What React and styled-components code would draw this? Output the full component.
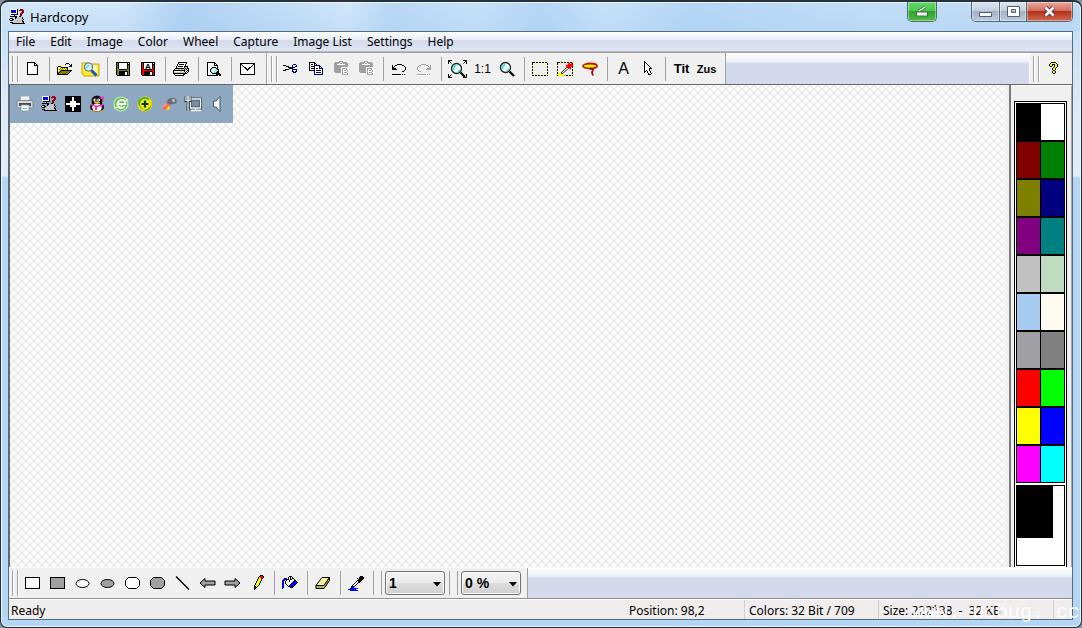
import React from 'react';
import styled, { createGlobalStyle } from 'styled-components';

const GlobalStyle = createGlobalStyle`
  *, *::before, *::after { box-sizing: border-box; }
  html, body, #root { height: 100%; }
  body {
    margin: 0;
    background: #8b9097;
    font: 12px/16px "Noto Sans", "Open Sans", sans-serif;
    color: #000;
    overflow: hidden;
  }
  button, select { font: inherit; color: inherit; }
`;

/* ---------- window ---------- */

const Window = styled.div`
  display: flex;
  flex-direction: column;
  height: 100%;
  padding: 0 8px 7px 7px;
  border: 1px solid #27313d;
  border-top-width: 2px;
  border-radius: 8px 8px 7px 7px;
  box-shadow: inset 0 0 0 1px #e9f5ff;
  background:
    linear-gradient(90deg, transparent 0, transparent 11%, #94c2ee88 17%, #a4ccf144 28%, transparent 32%, #a4ccf188 36%, #b4d6f666 44%, #9ccaf388 50%, #b4d6f655 56%, #9ccaf388 64%, #a4ccf155 80%, #a4ccf166 100%) top / 100% 29px no-repeat,
    linear-gradient(180deg, #d3e6f8 0, #c6dff7 29px, #dde9f4 100px, #e2ecf6 174px, #b3d6f5 176px, #b3d6f5 100%);
`;

const TitleBar = styled.header`
  display: flex;
  align-items: flex-start;
  height: 29px;
  padding-left: 1px;
  flex: none;
`;

const AppTitle = styled.h1`
  display: flex;
  align-items: center;
  gap: 5px;
  margin: 0;
  padding-top: 6px;
  flex: 1;
  font-size: 13px;
  font-weight: 400;
  line-height: 18px;
`;

const captionTones = {
  plain: 'linear-gradient(#dbe5ef 0, #c3d0de 45%, #a1b1c4 50%, #bccbdc 100%)',
  close: 'linear-gradient(#e9a99c 0, #d0705f 45%, #b5301b 50%, #cf6a4c 100%)',
  green: 'linear-gradient(#63d765 0, #4fc850 45%, #2da32d 50%, #51bd45 100%)',
};

const CaptionArea = styled.div`
  display: flex;
  gap: 34px;
`;

const CaptionGroup = styled.div`
  display: flex;
  height: 20px;
  border: 1px solid #566477;
  border-top: 0;
  border-radius: 0 0 5px 5px;
  overflow: hidden;
`;

const CaptionButton = styled.button`
  display: flex;
  align-items: center;
  justify-content: center;
  width: ${(p) => p.$width}px;
  height: 100%;
  padding: 0;
  border: 0;
  background: ${(p) => captionTones[p.$tone || 'plain']};
  box-shadow: inset 0 0 0 1px #ffffff66;
  & + & { border-left: 1px solid #566477; }
`;

const Client = styled.main`
  display: flex;
  flex-direction: column;
  flex: 1;
  min-height: 0;
  border: 1px solid #566a80;
  background: #f0f0f0;
`;

/* ---------- menu ---------- */

const MenuBar = styled.nav`
  display: flex;
  flex: none;
  gap: 1px;
  height: 20px;
  background: linear-gradient(#fdfeff 0, #e9edf7 40%, #d5daec 45%, #dfe4f3 100%);
  border-bottom: 1px solid #b4b7c6;
`;

const MenuItem = styled.button`
  padding: 0 7px;
  border: 0;
  background: none;
  line-height: 20px;
  white-space: nowrap;
`;

/* ---------- toolbars ---------- */

const Rebar = styled.div`
  display: flex;
  flex: none;
  height: ${(p) => p.$height}px;
  border-top: 1px solid ${(p) => (p.$lower ? '#ffffff' : '#a0a0a0')};
  border-bottom: 1px solid ${(p) => (p.$lower ? '#8f8f94' : '#686868')};
  background: linear-gradient(#ffffff 0, #e9edf7 30%, #d3d9ec 32%, #d3d9ec 100%);
`;

const Band = styled.div`
  display: flex;
  align-items: center;
  padding: 0 6px 0 3px;
  border-left: ${(p) => (p.$first ? 0 : 1)}px solid #fff;
  border-right: ${(p) => (p.$last ? 0 : 1)}px solid #a0a0a0;
  background: #f0f0f0;
  margin-left: ${(p) => (p.$last ? 'auto' : 0)};
`;

const Grip = styled.span`
  width: 6px;
  height: 26px;
  margin-right: 2px;
  border: solid #a0a0a0;
  border-width: 0 1px;
  box-shadow: 1px 0 #fff, inset 1px 0 #fff;
`;

const Tool = styled.button`
  display: flex;
  align-items: center;
  width: 25px;
  height: 24px;
  padding: 0 0 0 4px;
  border: 0;
  background: none;
`;

const TextTool = styled.button`
  width: 25px;
  height: 24px;
  padding: 0;
  border: 0;
  background: none;
  text-align: center;
  white-space: nowrap;
  font-family: "Liberation Sans", sans-serif;
  font-size: ${(p) => p.$size || 12}px;
  font-weight: ${(p) => (p.$bold ? 700 : 400)};
`;

const Divider = styled.span`
  display: flex;
  justify-content: center;
  width: 8px;
  height: 24px;
  &::before { content: ""; width: 1px; margin-left: 1px; background: #a0a0a0; }
`;

const SelectBox = styled.label`
  position: relative;
  display: block;
  width: 60px;
  height: 24px;
`;

const Select = styled.select`
  appearance: none;
  width: 100%;
  height: 100%;
  padding: 0 3px;
  border: 1px solid #707070;
  border-radius: 3px;
  background: linear-gradient(#f2f2f2 0, #ebebeb 50%, #dddddd 51%, #cfcfcf 100%);
  box-shadow: inset 0 0 0 1px #fafafa;
  font: 700 14px "Liberation Sans", sans-serif;
`;

const SelectArrow = styled.svg`
  position: absolute;
  right: 4px;
  top: 11px;
  pointer-events: none;
`;

/* ---------- work area ---------- */

const WorkArea = styled.div`
  display: flex;
  flex: 1;
  min-height: 0;
`;

const Canvas = styled.section`
  flex: 1;
  min-width: 0;
  border-left: 1px solid #686868;
  background-color: #fefefe;
  background-image:
    linear-gradient(45deg, transparent 43%, #e3e3e3 47% 53%, transparent 57%),
    linear-gradient(135deg, transparent 43%, #e3e3e3 47% 53%, transparent 57%);
  background-size: 8px 8px;
`;

const Capture = styled.div`
  display: flex;
  align-items: center;
  gap: 8px;
  width: 223px;
  height: 38px;
  padding-left: 7px;
  background: #8fa8c2;
`;

const Splitter = styled.div`
  flex: none;
  width: 7px;
  background: #f0f0f0;
  border-left: 1px solid #fff;
  border-right: 2px solid #7c7c7c;
`;

const PalettePanel = styled.aside`
  display: flex;
  flex: none;
  padding: 15px 4px 0 3px;
  border-top: 1px solid #fff;
  border-right: 1px solid #a8a8a8;
  background: #f0f0f0;
`;

const Palette = styled.div`
  display: flex;
  flex-direction: column;
  gap: 2px;
  padding: 1px;
  border: 1px solid #000;
  border-bottom: 0;
  background: #fff;
`;

const Swatches = styled.div`
  display: grid;
  grid-template-columns: 23px 23px;
  grid-auto-rows: 36px;
  gap: 2px 1px;
  padding: 1px;
  background: #000;
`;

const Swatch = styled.button`
  padding: 0;
  border: 0;
  background: ${(p) => p.$color};
`;

const Preview = styled.div`
  height: 81px;
  border: 1px solid #000;
  background: #fff;
`;

const CurrentColor = styled.div`
  width: 36px;
  height: 52px;
  background: #000;
`;

/* ---------- status bar ---------- */

const StatusBar = styled.footer`
  position: relative;
  display: flex;
  flex: none;
  height: 20px;
  border-top: 1px solid #fff;
  background: #f0eded;
  line-height: 21px;
`;

const StatusCell = styled.span`
  flex: ${(p) => (p.$width ? `0 0 ${p.$width}px` : '1')};
  padding-left: ${(p) => (p.$plain ? 2 : 4)}px;
  border-left: ${(p) => (p.$plain ? 0 : 1)}px solid #d2cfcf;
  white-space: pre;
`;

const Watermark = styled.span`
  position: absolute;
  right: -8px;
  top: 1px;
  color: #fff;
  font: 20px/24px "Liberation Mono", monospace;
  white-space: pre;
`;

/* ---------- icons ---------- */

const INK = {
  k: '#000', w: '#fff', y: '#ffff00', o: '#808000', r: '#ff0000', R: '#a00010',
  b: '#0000ff', n: '#000080', g: '#a0a0a0', s: '#c8c8c8', c: '#40e0e8',
};

const Svg16 = ({ children, ...rest }) => (
  <svg width="16" height="16" viewBox="0 0 16 16" overflow="visible" aria-hidden="true" {...rest}>
    {children}
  </svg>
);

function Pixels({ art, x = 0, y = 0, children }) {
  const runs = [];
  art.trim().split(/\s+/).forEach((row, j) => {
    for (let i = 0; i < row.length;) {
      let e = i + 1;
      while (row[e] === row[i]) e += 1;
      if (row[i] !== '.') {
        runs.push(<rect key={`${i}-${j}`} x={x + i} y={y + j} width={e - i} height="1" fill={INK[row[i]]} />);
      }
      i = e;
    }
  });
  return <Svg16 shapeRendering="crispEdges">{runs}{children}</Svg16>;
}

const DOC = `
kkkkkkkk...
kwwwwwwkk..
kwwwwwwkwk.
kwwwwwwkkkk
kwwwwwwwwwk
kwwwwwwwwwk
kwwwwwwwwwk
kwwwwwwwwwk
kwwwwwwwwwk
kwwwwwwwwwk
kwwwwwwwwwk
kwwwwwwwwwk
kkkkkkkkkkk`;

const OPEN = `
.........kkk....
........k...k.k.
.............kk.
.kkk........kkk.
kywykkkkkkk.....
kwyoyoyoyok.....
kyoyoyoyoyk.....
kwyokkkkkkkkkkk.
kyokoooooooook..
kokoooooooook...
kkoooooooook....
kkkkkkkkkkk.....`;

const FLOPPY = `
kkkkkkkkkkkkkk
kokwwwwwwwwkwk
kokwwwwwwwwkkk
kokwwwwwwwwkok
kokwwwwwwwwkok
kokwwwwwwwwkok
kokwwwwwwwwkok
kookkkkkkkkook
kooooooooooook
kookkkkkkkkkok
kookkkkkkwwkok
kookkkkkkwwkok
kookkkkkkwwkok
.kkkkkkkkkkkkk`;

const PRINTER = `
.....kkkkkkkkk..
.....kwwwwwwwk..
....kwkkkkkwk...
....kwwwwwwwk...
...kwkkkkkwkkkk.
...kwwwwwwwkssk.
..kkkkkkkkkskskk
.kssssssssskskwk
kkkkkkkkkkkkswkk
kwwwwwwyywwkwkwk
kssssssssssskwk.
kkkkkkkkkkkkkk..
.kwwwwwwwwkk....
..kkkkkkkkk.....`;

const PREVIEW = `
kkkkkkkk.......
kwwwwwwkk......
kwwwwwwkwk.....
kwwwwwwkkkk....
kwwwwwwwwwk....
kwwwwkkkkwk....
kwwwkcwwckk....
kwwkcwwwwckk...
kwwkwwwwcwsk...
kwwkcwwcwckk...
kwwwkcwcckkk...
kwwwwkkkkkkkk..
kwwwwwwwwkkkkk.
kkkkkkkkkkk.kk.`;

const CUT = `
..........nnn..
kkk......n...n.
.wwkkk...n..nn.
.....kkknnnn...
....wwkknn.....
..kkkkww.nnnnn.
kkk......n...n.
.........nn.nn.
..........nnn..`;

const COPY = `
kkkkkk.........
kwwwwkk........
kwkkwkwk.......
kwwwwnnnnnn....
kwkkknwwwwnn...
kwwwwnwwwwnwn..
kwkkknwnnwnnnn.
kwwwwnwwwwwwwn.
kkkkknwnnnnnwn.
.....nwwwwwwwn.
.....nwnnnnnwn.
.....nwwwwwwwn.
.....nnnnnnnnn.`;

const PASTE = `
.....gggg......
.gggggwwggggg..
gggggwggwggggg.
gggwwwwwwwwggg.
gggggggggggggg.
ggggggggggggggw
gggggggwwwwwww.
gggggggwgggggww
gggggggwgwwwgww
gggggggwgwggwgw
gggggggwgwwwwgw
.ggggggwgwgggww
.......wgwwwwgw
.......wggggggw`;

const UNDO = `
.....kkkkk....
k..kk.....kk..
k.k.........k.
kk...........k
kkkk.........k
kkkkk........k
............k.
..........kk..
..............
..............
kkkkkkkkk.k.k.
wwwwwwwwwwwwww`;

const REDO = `
....ggggg.....
..gg.....gg..g
.g.........g.g
g...........gg
g.........gggg
g........ggggg
.g............
..gg..........
..............
..............
ggggggggg.g.g.
wwwwwwwwwwwwww`;

const CURSOR = `
k.........
kk........
kwk.......
kwwk......
kwwwk.....
kwwwwk....
kwwwwwk...
kwwwwkkk..
kwwwwk....
kwkwwk....
kk.kwwk...
k..kwwk...
....kwwk..
....kkk...`;

const HELP = `
..kkkkk..
.kyyyyyk.
kyykkkyyk
kyyk.kyyk
.kk..kyyk
....kyyk.
...kyyk..
...kyyk..
....kk...
...kyyk..
...kyyk..
....kk...`;

const MACHINE = `
.wwwwwwwk..RRR..
.wbbbbbwk.RRRRR.
.wbbbbbwk....RR.
.wbbbbbwk...RRR.
.wwwwwwwk..RRR..
..kkkkkkk..RR...
....wk.....Rk...
.kkkkkkk..kk....
......kksssssk..
.kkk..kssssssk..
kwwkk.ssssssssk.
.kkksssssssssk..
....ssssssssskk.
.kkkssssssssssk.
...kkkkkkkkkkkkk`;

const PENCIL = `
........kkk.
.......krrrk
......kyrrrk
......kyyrk.
.....kyyyk..
.....kyyyk..
....kyyyk...
....kyyyk...
...kyyyk....
...kyyyk....
..kyyyk.....
..kkyk......
..kkk.......
..kk........
..k.........`;

const BUCKET = `
.......kkk......
......kwk.k.....
..bbb.kwk.kk....
.bbbkkkwkkwwk...
bbb.kwwkwwwwkk..
bb.kwwwkwwwkbbk.
bb.kwwwwwwkbbbbk
bb.kwwwwwkbbbbk.
bb..kwwwkbbbbk..
bb...kwkbbbbk...
bb....kkbbbk....
bb......kkk.....
b...............`;

const DROPPER = `
............kkk.
...........kkkkk
.........k.kkkkk
..........kkkkk.
.........kkkkk..
........kwkkk...
.......kwwkk....
......kwwk......
.....kwwk.......
....kwwk........
...kbbk.........
...kbk..........
..bkkbbbbb......
bbbbbbbb........
..bbbbbbbb......`;

const Lens = ({ handle = true }) => (
  <>
    <circle cx="6.5" cy="6.5" r="5" fill="#eafcfc" stroke="#202020" strokeWidth="1.3" />
    <path d="M3.5 8V5.5L6 3M8 10l2-2" stroke="#30d8e0" strokeWidth="1.7" fill="none" />
    {handle && <path d="M10.5 10.5L15 15" stroke="#111" strokeWidth="2.4" />}
  </>
);

const icons = {
  doc: <Pixels art={DOC} x={3} y={1} />,
  open: <Pixels art={OPEN} y={2} />,
  browse: (
    <Svg16>
      <path d="M0 2h7l1 1h9v12H2L0 13z" fill="#ffe928" stroke="#c8a800" strokeWidth="1" />
      <path d="M10 4h5v10h-4z" fill="#fff8c0" />
      <circle cx="6.5" cy="6" r="4" fill="#d8fbff" stroke="#58788c" strokeWidth="1.2" />
      <path d="M4 7l3-3" stroke="#58d8f0" strokeWidth="1.6" />
      <path d="M9.5 9.5l5 5" stroke="#1458c0" strokeWidth="3" />
    </Svg16>
  ),
  save: <Pixels art={FLOPPY} x={1} y={1} />,
  saveAs: (
    <Pixels art={FLOPPY.replace(/o/g, 'r')} x={1} y={1}>
      <text x="8" y="8" textAnchor="middle" fontFamily="Liberation Sans" fontSize="8" fontWeight="700">A</text>
    </Pixels>
  ),
  print: <Pixels art={PRINTER} y={1} />,
  preview: <Pixels art={PREVIEW} x={1} y={1} />,
  mail: (
    <Svg16 shapeRendering="crispEdges">
      <path d="M1.5 2.5h14v11h-14z" fill="#fff" stroke="#000" />
      <path d="M2 3l6.5 6L15 3" fill="none" stroke="#000" />
    </Svg16>
  ),
  cut: <Pixels art={CUT} y={3} />,
  copy: <Pixels art={COPY} x={1} y={1} />,
  paste: <Pixels art={PASTE} x={1} />,
  undo: <Pixels art={UNDO} x={1} y={3} />,
  redo: <Pixels art={REDO} x={1} y={3} />,
  fit: (
    <Svg16>
      <g transform="translate(1 1)"><Lens /></g>
      <path d="M-.5 3V-.5H3M-.5-.5l3 3M14-.5h3.5V3M17.5-.5l-3 3M-.5 13v3.5H3M-.5 16.5l3-3M14 16.5h3.5V13" stroke="#000" fill="none" />
    </Svg16>
  ),
  zoom: <Svg16><Lens /></Svg16>,
  marquee: (
    <Svg16 shapeRendering="crispEdges">
      <path d="M.5 1.500h15v13H.5z" fill="none" stroke="#f4f440" />
      <path d="M.5 1.500h15v13H.5z" fill="none" stroke="#000" strokeDasharray="2 1" />
    </Svg16>
  ),
  wand: (
    <Svg16>
      <path d="M.5 1.500h15v13H.5z" fill="none" stroke="#f4f440" shapeRendering="crispEdges" />
      <path d="M.5 1.500h15v13H.5z" fill="none" stroke="#000" strokeDasharray="2 1" shapeRendering="crispEdges" />
      <path d="M1 15v-3l3-1 4 4z" fill="#ff0" />
      <path d="M4 12l7-7 1 2-7 6z" fill="#fff" stroke="#000" strokeWidth=".8" />
      <path d="M8.500 3.500l2 .5L12 1l1 2 3-2-1 3 2 1-3 1 0 3-2-2-2 0z" fill="#f00" />
    </Svg16>
  ),
  lasso: (
    <Svg16>
      <ellipse cx="8" cy="5" rx="7" ry="2.500" fill="#ff0" stroke="#c01808" strokeWidth="1.800" />
      <path d="M8 7.500l3 1-1 3 1 3" fill="none" stroke="#a00808" strokeWidth="1.800" />
    </Svg16>
  ),
  pointer: <Pixels art={CURSOR} x={4} y={0} />,
  help: <Pixels art={HELP} x={4} y={1} />,
  pencil: <Pixels art={PENCIL} x={3} y={0} />,
  bucket: <Pixels art={BUCKET} x={0} y={1} />,
  eraser: (
    <Svg16>
      <path d="M1 10.500l6-8h7.500l-5.500 8z" fill="#ffffa0" stroke="#000" />
      <path d="M1 10.500h8l5.500-8v3L9 13.500H1z" fill="#b8b840" stroke="#000" />
    </Svg16>
  ),
  dropper: <Pixels art={DROPPER} x={0} y={1} />,
  line: <Svg16><path d="M2 1.500l13 13" stroke="#000" strokeWidth="1.400" /></Svg16>,
  machine: <Pixels art={MACHINE} y={0} />,
};

const ShapeIcon = ({ kind, filled }) => {
  const paint = { fill: filled ? '#a0a0a0' : '#fff', stroke: '#000', strokeWidth: 1 };
  return (
    <Svg16>
      {kind === 'rect' && <rect x="1.500" y="2.500" width="14" height="11" {...paint} />}
      {kind === 'oval' && <ellipse cx="8.500" cy="8.500" rx="6.500" ry="4" {...paint} />}
      {kind === 'round' && <path d="M4.500 2.500h8l3 3v5l-3 3h-8l-3-3v-5z" {...paint} />}
      {kind === 'left' && <path d="M1 8l5-4.500v2.500h10v4H6v2.500z" {...paint} />}
      {kind === 'right' && <path d="M16 8l-5-4.500v2.500H1v4h10v2.500z" {...paint} />}
    </Svg16>
  );
};

const Penguin = () => (
  <Svg16>
    <ellipse cx="8" cy="5" rx="5.500" ry="5.500" fill="#111" />
    <ellipse cx="8" cy="11" rx="7" ry="5" fill="#111" />
    <ellipse cx="8" cy="11.500" rx="4.800" ry="4" fill="#fff" />
    <circle cx="6" cy="4" r="1.600" fill="#fff" /><circle cx="9.500" cy="4" r="1.600" fill="#fff" />
    <circle cx="6.500" cy="4" r=".7" /><circle cx="9" cy="4" r=".7" />
    <ellipse cx="8" cy="6.500" rx="3" ry="1.100" fill="#ffc400" />
    <path d="M2 7.500q6 4 12 0l1 1.500q-4 2-7 2v3H6v-3.500Q3 10 1.500 9z" fill="#ff28b8" />
    <path d="M10 1l2 .5L14.500 0l.5 4-3-1z" fill="#ff28b8" />
    <path d="M2 15l3-1 2 1.500H3zM14 15l-3-1-2 1.500h4z" fill="#f0a000" />
  </Svg16>
);

const trayIcons = [
  <Svg16 key="printer">
    <path d="M3.500 0h9v5h-9z" fill="#edf3f7" stroke="#9aa6ae" strokeWidth=".8" />
    <rect x="0" y="4.500" width="16" height="7.500" rx="1.500" fill="#d5dade" stroke="#6d747a" strokeWidth=".8" />
    <path d="M2 7h12v3H2z" fill="#484c50" />
    <path d="M4 9h8v6H4z" fill="#fafcff" stroke="#8996a0" strokeWidth=".8" />
    <path d="M5.500 12.500h5" stroke="#70b8e0" />
  </Svg16>,
  <React.Fragment key="machine">{icons.machine}</React.Fragment>,
  <Svg16 key="cross" shapeRendering="crispEdges">
    <path d="M0 0h16v16H0z" fill="#000" />
    <path d="M7 1h2v4h2v2h4v2h-4v2H9v4H7v-4H5V9H1V7h4V5h2z" fill="#fff" />
  </Svg16>,
  <Penguin key="penguin" />,
  <Svg16 key="browser">
    <circle cx="8" cy="8" r="7" fill="#58c044" stroke="#c8f0b8" strokeWidth="1.200" />
    <path d="M4 8h8.500q0-4-4-4Q4.500 4.500 4.200 8.500q.8 3.800 4.500 3.500 2-.2 3-1.800" fill="none" stroke="#fff" strokeWidth="1.800" />
    <path d="M1 12Q8 12 15 3" fill="none" stroke="#e8ffe0" />
  </Svg16>,
  <Svg16 key="guard">
    <circle cx="8" cy="8" r="7.500" fill="#f6d800" />
    <path d="M1 5Q6-2 13 3q-5 1-7 10-5-2-5-8M15 9q-3 7-9 6 5-2 9-6" fill="#48b428" />
    <circle cx="8" cy="8" r="5" fill="#fae820" />
    <path d="M8 4.500v7M4.500 8h7" stroke="#064010" strokeWidth="2.200" />
  </Svg16>,
  <Svg16 key="input">
    <path d="M6 5q1-3 5-3 5 0 5 3t-4 3q-2 0-3 1L6 7z" fill="#6b7078" />
    <circle cx="12.500" cy="4.500" r="1.500" fill="#bfc8d0" />
    <path d="M1 12l5-5 3 2-1 4-3 1z" fill="#f46a38" />
    <path d="M5 14l2-4 2 1-1 3z" fill="#ffd030" />
    <path d="M0 11l5-4 1 2-4 3z" fill="#e890a8" />
  </Svg16>,
  <Svg16 key="network">
    <path d="M5.500 3h10v9h-10z" fill="#768da3" stroke="#3c4c58" strokeWidth="3" />
    <path d="M5.500 3h10v9h-10zM6 14.500h10M10.500 12v2" fill="none" stroke="#f4f8fa" strokeWidth="1.300" />
    <path d="M1 .5v4h4v-4M3 4.500V15" fill="none" stroke="#1f3038" strokeWidth="2.800" />
    <path d="M1 .5v4h4v-4M3 4.500V15M3 0v4" fill="none" stroke="#fff" strokeWidth="1.200" />
  </Svg16>,
  <Svg16 key="sound">
    <path d="M4.500 5h2.500l4-4.500v15L7 11H4.500z" fill="#f5f7fa" stroke="#465665" strokeWidth="1" />
  </Svg16>,
];

/* ---------- data ---------- */

const MENUS = ['File', 'Edit', 'Image', 'Color', 'Wheel', 'Capture', 'Image List', 'Settings', 'Help'];

const FILE_TOOLS = [['doc', 'New'], null, ['open', 'Open'], ['browse', 'Browse'], null, ['save', 'Save'], ['saveAs', 'Save as'], null, ['print', 'Print'], null, ['preview', 'Print preview'], null, ['mail', 'Send mail']];
const EDIT_TOOLS = [['cut', 'Cut'], ['copy', 'Copy'], ['paste', 'Paste'], ['paste', 'Paste new'], null, ['undo', 'Undo'], ['redo', 'Redo'], null, ['fit', 'Fit to window']];
const SELECT_TOOLS = [['zoom', 'Zoom'], null, ['marquee', 'Select'], ['wand', 'Magic wand'], ['lasso', 'Lasso'], null];

const SHAPES = [
  ['rect', false], ['rect', true], ['oval', false], ['oval', true], ['round', false], ['round', true],
];

const COLORS = [
  '#000000', '#ffffff', '#800000', '#008000', '#808000', '#000080', '#800080', '#008080',
  '#c0c0c0', '#c0dcc0', '#a6caf0', '#fffbf0', '#a0a0a4', '#808080', '#ff0000', '#00ff00',
  '#ffff00', '#0000ff', '#ff00ff', '#00ffff',
];

const Tools = ({ items }) =>
  items.map((item, i) =>
    item ? <Tool key={i} aria-label={item[1]}>{icons[item[0]]}</Tool> : <Divider key={i} />);

const DropDown = ({ label, value }) => (
  <SelectBox>
    <Select aria-label={label} defaultValue={value}><option>{value}</option></Select>
    <SelectArrow width="8" height="5" viewBox="0 0 8 5" aria-hidden="true"><path d="M0 0h8L4 4.500z" /></SelectArrow>
  </SelectBox>
);

export default function App() {
  return (
    <>
      <GlobalStyle />
      <Window>
        <TitleBar>
          <AppTitle>{icons.machine}Hardcopy</AppTitle>
          <CaptionArea>
            <CaptionGroup>
              <CaptionButton $width={28} $tone="green" aria-label="Share">
                <svg width="14" height="13" viewBox="0 0 14 13">
                  <path d="M1.500 7h11v4h-11z" fill="#fff" stroke="#38703a" />
                  <path d="M4 6l6-4" stroke="#38703a" strokeWidth="3" /><path d="M4 6l6-4" stroke="#fff" strokeWidth="1.500" />
                </svg>
              </CaptionButton>
            </CaptionGroup>
            <CaptionGroup>
              <CaptionButton $width={27} aria-label="Minimize">
                <svg width="13" height="13" viewBox="0 0 13 13"><path d="M.5 7.500h12v4H.5z" fill="#fff" stroke="#535f70" /></svg>
              </CaptionButton>
              <CaptionButton $width={27} aria-label="Maximize">
                <svg width="13" height="11" viewBox="0 0 13 11"><path d="M.5.5h12v10H.5zM4.500 3.500v3h4v-3z" fillRule="evenodd" fill="#fff" stroke="#535f70" /></svg>
              </CaptionButton>
              <CaptionButton $width={46} $tone="close" aria-label="Close">
                <svg width="13" height="11" viewBox="0 0 13 11">
                  <path d="M2.500 1.500l8 8M10.500 1.500l-8 8" stroke="#5d3434" strokeWidth="4.500" />
                  <path d="M2.500 1.500l8 8M10.500 1.500l-8 8" stroke="#fff" strokeWidth="2.500" />
                </svg>
              </CaptionButton>
            </CaptionGroup>
          </CaptionArea>
        </TitleBar>

        <Client>
          <MenuBar>
            {MENUS.map((name) => <MenuItem key={name}>{name}</MenuItem>)}
          </MenuBar>

          <Rebar $height={33}>
            <Band $first><Grip /><Tools items={FILE_TOOLS} /></Band>
            <Band>
              <Grip />
              <Tools items={EDIT_TOOLS} />
              <TextTool>1:1</TextTool>
              <Tools items={SELECT_TOOLS} />
              <TextTool $size={16}>A</TextTool>
              <Tool aria-label="Pointer">{icons.pointer}</Tool>
              <Divider />
              <TextTool $bold $size={13}>Tit</TextTool>
              <TextTool $bold $size={11}>Zus</TextTool>
            </Band>
            <Band $last>
              <Grip />
              <Tool aria-label="Help">{icons.help}</Tool>
            </Band>
          </Rebar>

          <WorkArea>
            <Canvas>
              <Capture>{trayIcons}</Capture>
            </Canvas>
            <Splitter />
            <PalettePanel>
              <Palette>
                <Swatches>
                  {COLORS.map((c) => <Swatch key={c} $color={c} aria-label={c} />)}
                </Swatches>
                <Preview><CurrentColor /></Preview>
              </Palette>
            </PalettePanel>
          </WorkArea>

          <Rebar $height={32} $lower>
            <Band $first>
              <Grip />
              {SHAPES.map(([kind, filled]) => (
                <Tool key={kind + filled} aria-label={kind}><ShapeIcon kind={kind} filled={filled} /></Tool>
              ))}
              <Tool aria-label="Line">{icons.line}</Tool>
              <Tool aria-label="Arrow left"><ShapeIcon kind="left" filled /></Tool>
              <Tool aria-label="Arrow right"><ShapeIcon kind="right" filled /></Tool>
              <Tools items={[['pencil', 'Pencil'], null, ['bucket', 'Fill'], null, ['eraser', 'Eraser'], null, ['dropper', 'Pick colour'], null]} />
              <Divider />
              <DropDown label="Line width" value="1" />
              <Divider /><Divider />
              <DropDown label="Tolerance" value="0 %" />
            </Band>
          </Rebar>

          <StatusBar>
            <StatusCell $plain>Ready</StatusCell>
            <StatusCell $plain $width={117}>Position: 98,2</StatusCell>
            <StatusCell $width={134}>Colors: 32 Bit / 709</StatusCell>
            <StatusCell $width={175}>{'Size: 222*38  -  32 KB'}</StatusCell>
            <StatusCell $width={19} />
            <Watermark>www. ucbug. cc</Watermark>
          </StatusBar>
        </Client>
      </Window>
    </>
  );
}
